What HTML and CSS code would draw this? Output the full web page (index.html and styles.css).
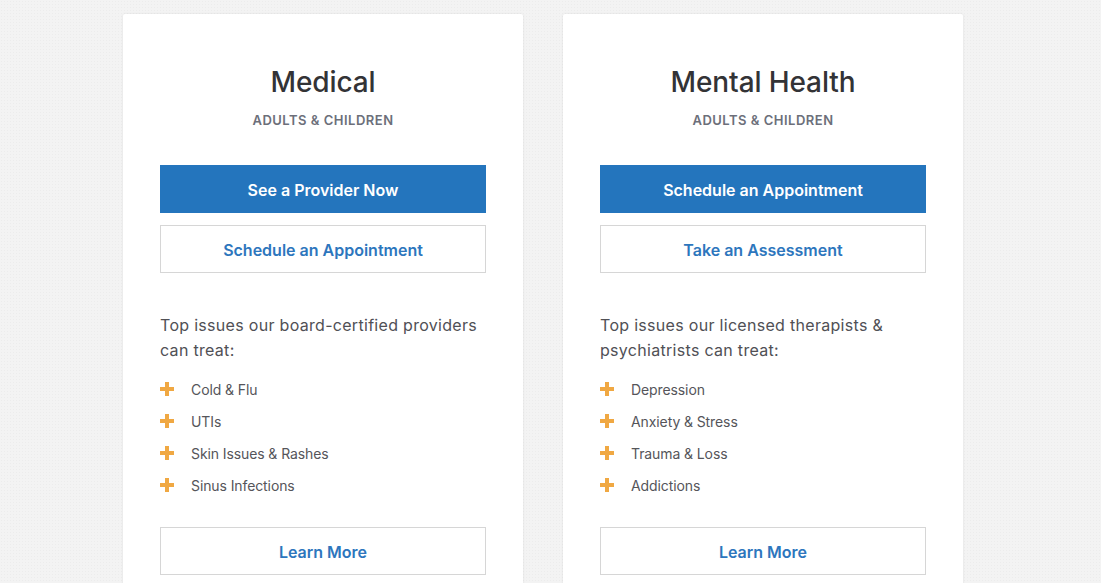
FILE: index.html
```html
<!DOCTYPE html>
<html>
<head>
<meta charset="utf-8">
<link rel="stylesheet" href="styles.css">
</head>
<body>
<div class="page">
  <div class="card">
    <h2 class="title">Medical</h2>
    <div class="sub">ADULTS &amp; CHILDREN</div>
    <a class="btn primary">See a Provider Now</a>
    <a class="btn outline">Schedule an Appointment</a>
    <p class="intro">Top issues our board-certified providers can treat:</p>
    <ul class="list">
      <li><span class="plus"></span>Cold &amp; Flu</li>
      <li><span class="plus"></span>UTIs</li>
      <li><span class="plus"></span>Skin Issues &amp; Rashes</li>
      <li><span class="plus"></span>Sinus Infections</li>
    </ul>
    <a class="btn outline">Learn More</a>
  </div>
  <div class="card">
    <h2 class="title">Mental Health</h2>
    <div class="sub">ADULTS &amp; CHILDREN</div>
    <a class="btn primary">Schedule an Appointment</a>
    <a class="btn outline">Take an Assessment</a>
    <p class="intro">Top issues our licensed therapists &amp; psychiatrists can treat:</p>
    <ul class="list">
      <li><span class="plus"></span>Depression</li>
      <li><span class="plus"></span>Anxiety &amp; Stress</li>
      <li><span class="plus"></span>Trauma &amp; Loss</li>
      <li><span class="plus"></span>Addictions</li>
    </ul>
    <a class="btn outline">Learn More</a>
  </div>
</div>
</body>
</html>
```
FILE: styles.css
```css
html, body {
  margin: 0;
  padding: 0;
  height: 100%;
  overflow: hidden;
}
body {
  background-color: #f3f3f3;
  background-image: radial-gradient(#ececec 0.6px, transparent 0.7px);
  background-size: 3px 3px;
  font-family: Inter, "Noto Sans", sans-serif;
}
.page {
  display: flex;
  gap: 40px;
  padding: 14px 0 0 123px;
}
.card {
  width: 326px;
  background: #fff;
  padding: 50px 37px 40px;
  box-shadow: 0 0 3px rgba(0,0,0,0.08);
  border-radius: 2px;
  display: flex;
  flex-direction: column;
}
.title {
  margin: 0;
  text-align: center;
  font-size: 28px;
  font-weight: 500;
  color: #333336;
  line-height: 36px;
  letter-spacing: -0.1px;
}
.sub {
  text-align: center;
  margin-top: 12px;
  font-size: 13px;
  font-weight: 600;
  color: #6c6f7a;
  letter-spacing: 0.5px;
  line-height: 16px;
}
.btn {
  display: flex;
  align-items: center;
  justify-content: center;
  box-sizing: border-box;
  height: 48px;
  padding-top: 2px;
  font-size: 16px;
  font-weight: 600;
  text-decoration: none;
}
.primary {
  margin-top: 37px;
  background: #2475bd;
  color: #fff;
}
.outline {
  margin-top: 12px;
  border: 1px solid #d6d6d6;
  color: #2d76bd;
  background: #fff;
}
.intro {
  margin: 40px 0 0;
  font-size: 16px;
  letter-spacing: 0.3px;
  line-height: 25px;
  color: #505055;
}
.list {
  list-style: none;
  margin: 10px 0 0;
  padding: 0;
}
.list li {
  display: flex;
  align-items: center;
  height: 32px;
  font-size: 14px;
  color: #55555a;
  letter-spacing: -0.1px;
}
.plus {
  position: relative;
  width: 14px;
  height: 14px;
  margin-right: 17px;
  flex: none;
}
.plus::before, .plus::after {
  content: "";
  position: absolute;
  background: #f0a843;
}
.plus::before {
  left: 5px; top: 0; width: 4px; height: 14px;
}
.plus::after {
  left: 0; top: 5px; width: 14px; height: 4px;
}
.list + .btn {
  margin-top: 26px;
}
```
